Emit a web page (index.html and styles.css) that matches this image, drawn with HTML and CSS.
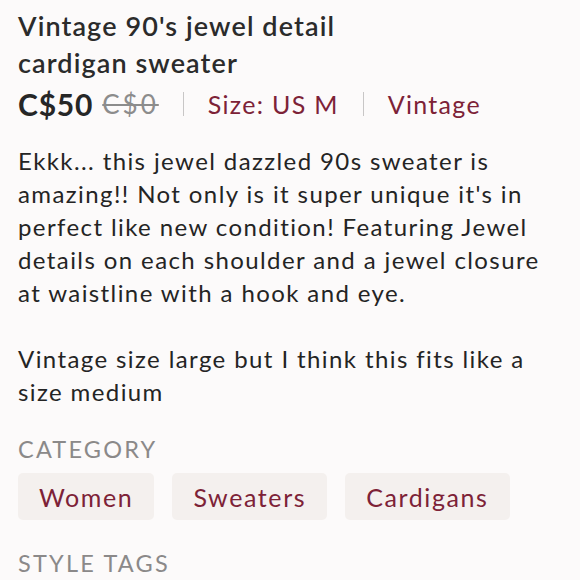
FILE: index.html
```html
<!DOCTYPE html>
<html lang="en">
<head>
<meta charset="utf-8">
<title>Listing</title>
<link rel="stylesheet" href="styles.css">
</head>
<body>
<main class="listing">
  <h1 class="title">Vintage 90's jewel detail cardigan sweater</h1>
  <div class="meta">
    <span class="price">C$50</span>
    <span class="orig">C$0</span>
    <span class="sep"></span>
    <span class="link">Size: US M</span>
    <span class="sep"></span>
    <span class="link">Vintage</span>
  </div>
  <div class="desc">
    <p>Ekkk... this jewel dazzled 90s sweater is amazing!! Not only is it super unique it's in perfect like new condition! Featuring Jewel details on each shoulder and a jewel closure at waistline with a hook and eye.</p>
    <p>Vintage size large but I think this fits like a size medium</p>
  </div>
  <h2 class="label">Category</h2>
  <div class="chips">
    <span class="chip">Women</span>
    <span class="chip">Sweaters</span>
    <span class="chip">Cardigans</span>
  </div>
  <h2 class="label">Style Tags</h2>
</main>
</body>
</html>
```
FILE: styles.css
```css
html, body {
  margin: 0;
  background: #fcfafa;
}
body {
  font-family: Lato, "Open Sans", sans-serif;
  color: #232323;
}
.listing {
  padding: 7px 18px 0 18px;
  width: 580px;
  box-sizing: border-box;
}
.title {
  margin: 0;
  font-size: 27px;
  line-height: 37px;
  font-weight: 600;
  letter-spacing: 1.1px;
  color: #2b2b2b;
  width: 360px;
}
.meta {
  display: flex;
  align-items: center;
  height: 40px;
  margin-top: 3px;
  font-size: 25px;
  letter-spacing: 1.3px;
}
.price {
  font-size: 30px;
  font-weight: 700;
  letter-spacing: 0.8px;
  color: #262626;
}
.orig {
  margin-left: 9px;
  font-size: 26px;
  letter-spacing: 3px;
  color: #8c8c8c;
  text-decoration: line-through;
  text-decoration-thickness: 2px;
}
.sep {
  width: 1px;
  height: 24px;
  background: #c8c6c6;
  margin: 0 24px;
}
.link {
  color: #7d2237;
}
.desc {
  margin-top: 20px;
  font-size: 24px;
  line-height: 33px;
  letter-spacing: 1.4px;
  color: #242424;
}
.desc p {
  margin: 0 0 33px 0;
}
.desc p:last-child {
  margin-bottom: 26px;
}
.label {
  margin: 0;
  font-size: 23.5px;
  line-height: 30px;
  font-weight: 400;
  letter-spacing: 2.2px;
  text-transform: uppercase;
  color: #8b8989;
}
.chips {
  display: flex;
  gap: 18px;
  margin-top: 9px;
  margin-bottom: 28px;
}
.chip {
  display: flex;
  align-items: center;
  height: 47px;
  padding: 0 21px;
  background: #f4f0ee;
  border-radius: 5px;
  color: #7d2237;
  font-size: 25px;
  letter-spacing: 1.6px;
}
```
